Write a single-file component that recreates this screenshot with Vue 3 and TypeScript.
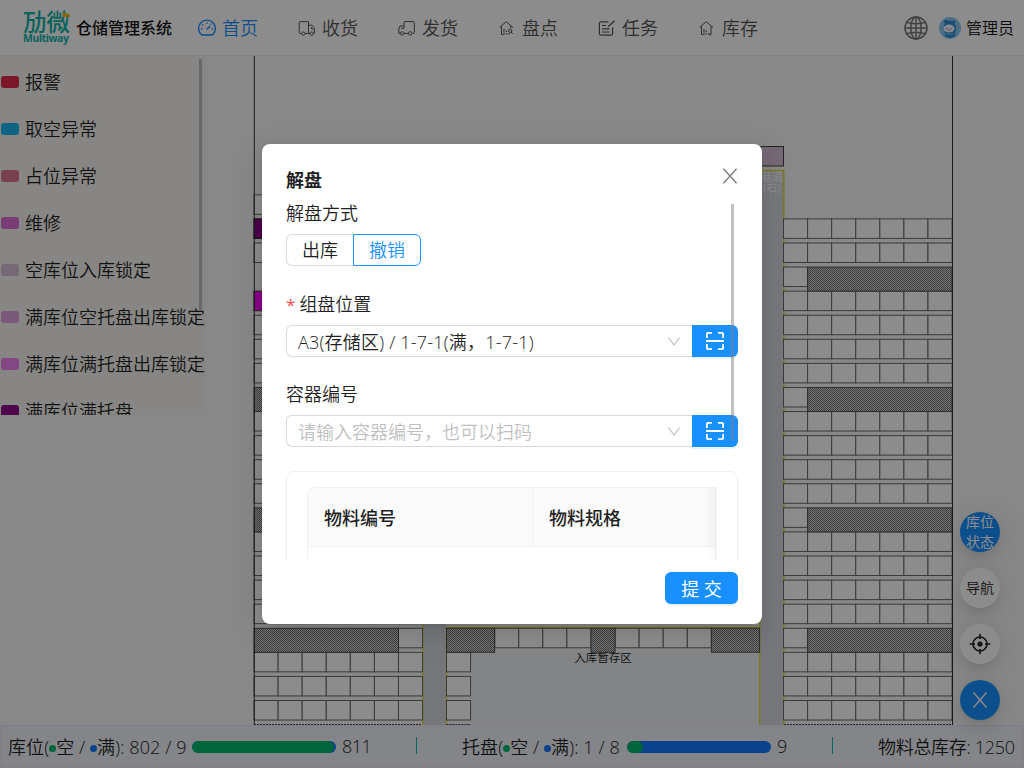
<script setup lang="ts">
interface Rect { x: number; y: number; w: number; h: number }
interface Legend { label: string; color: string }

const navItems = [
  { label: '首页', icon: 'dash' },
  { label: '收货', icon: 'truck' },
  { label: '发货', icon: 'truckBack' },
  { label: '盘点', icon: 'houseCheck' },
  { label: '任务', icon: 'form' },
  { label: '库存', icon: 'house' },
]

const legends: Legend[] = [
  { label: '报警', color: '#dc2847' },
  { label: '取空异常', color: '#1bb8ef' },
  { label: '占位异常', color: '#d9798f' },
  { label: '维修', color: '#da70d6' },
  { label: '空库位入库锁定', color: '#d8bfd8' },
  { label: '满库位空托盘出库锁定', color: '#dda0dd' },
  { label: '满库位满托盘出库锁定', color: '#ee82ee' },
  { label: '满库位满托盘', color: '#8b1089' },
]

const pitch = 24.08
const rowTop = (i: number) => 218.9 + pitch * i
const blockedRows = [2, 7, 12, 17]
const cells: Rect[] = []
const blocked: Rect[] = []

for (let i = 0; i <= 20; i++) {
  const y = rowTop(i)
  const isBlocked = blockedRows.includes(i)
  for (let c = 0; c < 7; c++) {
    if (!isBlocked || c === 0) cells.push({ x: 783.5 + c * pitch, y, w: pitch, h: 19.5 })
    if (i !== 2 && (!isBlocked || c === 6)) cells.push({ x: 254 + c * pitch, y, w: pitch, h: 19.5 })
  }
  if (isBlocked) {
    blocked.push({ x: 783.5 + pitch, y, w: pitch * 6, h: 24 })
    if (i !== 2) blocked.push({ x: 254, y, w: pitch * 6, h: 24 })
  }
  if (i > 17) cells.push({ x: 446.5, y, w: pitch, h: 19.5 })
}
cells.push({ x: 254, y: rowTop(-1), w: pitch, h: 19.5 })
for (let c = 2; c < 11; c++) {
  if (c !== 6) cells.push({ x: 446.5 + c * pitch, y: rowTop(17), w: pitch, h: 19.5 })
}
blocked.push(
  { x: 446.5, y: rowTop(17), w: pitch * 2, h: 24 },
  { x: 446.5 + pitch * 6, y: rowTop(17), w: pitch, h: 24 },
  { x: 446.5 + pitch * 11, y: rowTop(17), w: pitch * 2, h: 24 },
)
</script>

<template>
  <div class="page">
    <header class="header">
      <div class="logo"><span class="logo-cn">劢微</span><span class="logo-en">Multiway</span>
        <svg class="logo-flag" width="7" height="4" viewBox="0 0 7 4"><path d="M0 0h4l3 2v2H0z" fill="#f5bd16" /></svg>
      </div>
      <h1 class="brand">仓储管理系统</h1>
      <nav class="nav">
        <a v-for="(n, i) in navItems" :key="n.label" class="nav-item" :class="{ active: i === 0 }">
          <svg width="18" height="18" viewBox="0 0 18 18" fill="none" stroke="currentColor" stroke-width="1">
            <template v-if="n.icon === 'dash'">
              <path d="M3.7 16A8.4 8.4 0 1 1 14.3 16z" stroke-width="1.4" stroke-linejoin="round" />
              <path d="M8.6 10.6l3.6-3.6M9 3.4v1.6M4.2 5.4l1 1M12.6 5.4l.6-.6M2.9 10h1.5M13.6 10h1.5" stroke-width="1.4" />
            </template>
            <template v-else-if="n.icon === 'truck'">
              <path d="M3.5 14.5H2.2a1 1 0 0 1-1-1V3.7a1 1 0 0 1 1-1h8.3v11.8H7M10.5 6.2h3.6l2.3 3.2v5.1h-1M11 14.5h1M13.6 8.2v1.8h2" />
              <circle cx="5.2" cy="14.6" r="1.6" /><circle cx="13.6" cy="14.6" r="1.6" />
            </template>
            <template v-else-if="n.icon === 'truckBack'">
              <path d="M2.4 14.4H.8V10L2 7h4v2.3H3.2M6 7V3.6a1 1 0 0 1 1-1h8.3a1 1 0 0 1 1 1v9.8a1 1 0 0 1-1 1h-1M6 14.4h4.6" />
              <circle cx="4.2" cy="14.4" r="1.7" /><circle cx="12.2" cy="14.4" r="1.7" />
            </template>
            <template v-else-if="n.icon === 'form'">
              <path d="M10.5 2.8H3.2a1.8 1.8 0 0 0-1.8 1.8v9.8a1.8 1.8 0 0 0 1.8 1.8h9.6a1.8 1.8 0 0 0 1.8-1.8V8.2M10 7.8L16.5 1.8M4 6.5h4M4 9.8h7.5M4 13h7.5" stroke-width="1.2" />
            </template>
            <template v-else>
              <path d="M1.5 8.5L8.2 2.7 15 8.5" />
              <path d="M3.5 7.2v8.4h2" />
              <path v-if="n.icon === 'house'" d="M13 7.2v8.4h-2" />
              <path v-else d="M12.8 7v2" />
              <path d="M6 10v1.3M6 12.3v1.2M6 14.4v1.2M8.4 11.6v1.2M8.4 14.2v1.2M10.8 14.2v1.2" stroke-width="1.5" />
              <circle v-if="n.icon === 'houseCheck'" cx="12.2" cy="11.8" r="1.6" />
              <path v-if="n.icon === 'houseCheck'" d="M13.2 13l1.4 2" />
            </template>
          </svg>
          <span>{{ n.label }}</span>
        </a>
      </nav>
      <div class="account">
        <svg class="globe" width="24" height="24" viewBox="0 0 24 24" fill="none" stroke="#777" stroke-width="1.5">
          <circle cx="12" cy="12" r="11" /><ellipse cx="12" cy="12" rx="5.2" ry="11" />
          <path d="M12 1v22M1 12h22M3 6.2q9 3.2 18 0M3 17.8q9-3.2 18 0" />
        </svg>
        <svg width="22" height="22" viewBox="0 0 22 22">
          <circle cx="11" cy="11" r="11" fill="#8ac9f3" />
          <path d="M5 3.4q3-1 4 .6 2-.6 4 .2 1.600-1.700 3-.4.4 1.600-.6 3 3 4 1.100 7.200l-.5 5q-5.500 3.500-10 0l-.5-5Q3 10 6 6.500q-1.500-1.500-1-3.100z" fill="#2e8bd4" />
          <ellipse cx="10" cy="11.500" rx="5.600" ry="4" fill="#f2f8ff" />
          <path d="M7 11.700h1.300M11.500 11.700h1.300M9.300 13.300h1.200" stroke="#557" stroke-width=".8" />
          <path d="M6.500 16.500q4.500 2 8 0" stroke="#8ad4ff" stroke-width="1" fill="none" />
        </svg>
        <span class="user">管理员</span>
      </div>
    </header>

    <main class="stage">
      <svg class="map" width="1024" height="669" viewBox="0 56 1024 669">
        <defs>
          <pattern id="hatch" width="4" height="4" patternUnits="userSpaceOnUse">
            <rect width="4" height="4" fill="#d2d2d2" />
            <path d="M0 0h1v1H0zM1 1h1v1H1zM2 2h1v1H2zM3 3h1v1H3zM2 0h1v1H2zM3 1h1v1H3zM0 2h1v1H0zM1 3h1v1H1z" fill="#757575" />
          </pattern>
        </defs>
        <rect x="423" y="170" width="23.5" height="555" fill="#d6d9e0" />
        <rect x="760" y="170" width="23.5" height="555" fill="#d6d9e0" />
        <rect x="471" y="652.5" width="289" height="73" fill="#eef1f4" />
        <path d="M422.8 170V725M446.5 627V725M446 627.5H760M759.7 170V725M760 170.5H784M783.8 170V725" stroke="#e0dc3c" stroke-width="1.4" fill="none" />
        <rect v-for="(r, i) in cells" :key="'c' + i" :x="r.x" :y="r.y" :width="r.w" :height="r.h" class="cell" />
        <rect v-for="(r, i) in blocked" :key="'b' + i" :x="r.x" :y="r.y" :width="r.w" :height="r.h" class="blocked" />
        <rect x="254" y="218.9" width="24" height="19.5" fill="#8b008b" stroke="#333" />
        <rect x="254" y="291.2" width="24" height="19.5" fill="#ff00ff" stroke="#555" />
        <rect x="760" y="146.5" width="23.5" height="19.5" fill="#d8bfd8" stroke="#444" />
        <path d="M254.3 56V725M952.5 56V725" stroke="#333" fill="none" />
        <path d="M254 724.5H422M446.5 724.5H471M784 724.5H952" stroke="#444" stroke-dasharray="2 1" fill="none" />
        <text x="772" y="180.5" class="lane">巷道</text>
        <text x="772" y="192" class="lane">(右)</text>
        <text x="603" y="661.5" class="area">入库暂存区</text>
      </svg>
      <aside class="legend">
        <ul>
          <li v-for="l in legends" :key="l.label"><i :style="{ background: l.color }"></i><span>{{ l.label }}</span></li>
        </ul>
        <span class="legend-scroll"></span>
      </aside>
      <div class="floats">
        <button class="fab primary">库位<br>状态</button>
        <button class="fab">导航</button>
        <button class="fab">
          <svg width="22" height="22" viewBox="0 0 22 22" fill="none" stroke="#222" stroke-width="1.6">
            <circle cx="11" cy="11" r="7" /><path d="M11 .8V6M11 16v5.2M.8 11H6M16 11h5.2" /><circle cx="11" cy="11" r="2.6" fill="#222" stroke="none" />
          </svg>
        </button>
        <button class="fab primary">
          <svg width="16" height="18" viewBox="0 0 16 18" fill="none" stroke="#fff" stroke-width="1.4"><path d="M1.5 1.5l13 15M14.5 1.5l-13 15" /></svg>
        </button>
      </div>
    </main>

    <footer class="status">
      <span class="stat-label first">库位(<b class="dot green"></b>空 / <b class="dot blue"></b>满): 802 / 9</span>
      <span class="bar"><i :style="{ width: '98.9%' }"></i></span>
      <span class="num">811</span>
      <span class="sep"></span>
      <span class="stat-label second">托盘(<b class="dot green"></b>空 / <b class="dot blue"></b>满): 1 / 8</span>
      <span class="bar"><i :style="{ width: '11.1%' }"></i></span>
      <span class="num">9</span>
      <span class="sep"></span>
      <span class="total">物料总库存: 1250</span>
    </footer>

    <div class="mask">
      <section class="modal">
        <div class="modal-head">
          <h2>解盘</h2>
          <svg width="16" height="16" viewBox="0 0 16 16" fill="none" stroke="#858585" stroke-width="1.6"><path d="M1.4 .8l13.2 14.4M14.6 .8L1.4 15.2" /></svg>
        </div>
        <div class="modal-body">
          <div class="label">解盘方式</div>
          <div class="radios"><span class="radio">出库</span><span class="radio on">撤销</span></div>
          <div class="label spaced"><em>*</em>组盘位置</div>
          <div class="field">
            <div class="select value">
              <span>A3(存储区) / 1-7-1(满，1-7-1)</span>
              <svg width="12" height="9" viewBox="0 0 12 9" fill="none" stroke="#bfbfbf" stroke-width="1.2"><path d="M.5 .5L6 8 11.5 .5" /></svg>
            </div>
            <button class="scan">
              <svg width="18" height="18" viewBox="0 0 18 18" fill="none" stroke="#fff" stroke-width="1.8"><path d="M.9 6V2Q.9 .9 2 .9H6M12 .9h4q1.1 0 1.1 1.1V6M.9 12v4q0 1.1 1.1 1.1H6M12 17.1h4q1.1 0 1.1-1.1v-4M0 9h18" /></svg>
            </button>
          </div>
          <div class="label next">容器编号</div>
          <div class="field">
            <div class="select placeholder">
              <span>请输入容器编号，也可以扫码</span>
              <svg width="12" height="9" viewBox="0 0 12 9" fill="none" stroke="#bfbfbf" stroke-width="1.2"><path d="M.5 .5L6 8 11.5 .5" /></svg>
            </div>
            <button class="scan">
              <svg width="18" height="18" viewBox="0 0 18 18" fill="none" stroke="#fff" stroke-width="1.8"><path d="M.9 6V2Q.9 .9 2 .9H6M12 .9h4q1.1 0 1.1 1.1V6M.9 12v4q0 1.1 1.1 1.1H6M12 17.1h4q1.1 0 1.1-1.1v-4M0 9h18" /></svg>
            </button>
          </div>
          <div class="card">
            <div class="table">
              <div class="thead"><span>物料编号</span><span>物料规格</span></div>
            </div>
          </div>
          <span class="body-scroll"></span>
        </div>
        <div class="modal-foot"><button class="submit">提 交</button></div>
      </section>
    </div>
  </div>
</template>

<style>
body { margin: 0; overflow: hidden; }
</style>

<style scoped>
* { box-sizing: border-box; }
button { border: 0; padding: 0; font: inherit; }
.page {
  position: relative; width: 1024px; height: 768px; overflow: hidden;
  display: flex; flex-direction: column; background: #f7f7f7;
  font-family: "Open Sans", "Noto Sans CJK SC", sans-serif;
  font-size: 18px; font-weight: 350; color: #1f1f1f;
}
.header { height: 56px; flex: none; display: flex; align-items: center; background: #fff; border-bottom: 1px solid #eee; padding: 0 10px 0 23px; }
.logo { position: relative; width: 48px; height: 36px; color: #0fb5a6; display: flex; flex-direction: column; }
.logo-cn { height: 23px; margin-top: 1px; font: 500 23.5px/20px "Noto Sans CJK SC", sans-serif; white-space: nowrap; }
.logo-en { font: 700 10.5px/11px "Open Sans", sans-serif; letter-spacing: -.45px; margin-top: -1px; }
.logo-flag { position: absolute; left: 40px; top: 3px; }
.brand { margin: 0 0 0 5px; padding-bottom: 2px; width: 98px; font: 500 16px/24px "Noto Sans CJK SC", sans-serif; color: #111; white-space: nowrap; }
.nav { display: flex; margin-left: 24px; }
.nav-item { display: flex; align-items: center; gap: 6px; width: 100px; color: #555; white-space: nowrap; }
.nav-item span { padding-bottom: 2px; }
.nav-item.active { color: #1890ff; }
.account { margin-left: auto; display: flex; align-items: center; }
.account .globe { margin-right: 11px; }
.user { margin-left: 5px; padding-bottom: 1px; font-size: 16px; white-space: nowrap; color: #111; }
.stage { position: relative; height: 669px; flex: none; }
.map { display: block; }
.cell { fill: #fff; stroke: #6a6a6a; stroke-width: 1; }
.blocked { fill: url(#hatch); stroke: #555; stroke-width: 1; }
.lane { font-size: 11px; font-weight: 400; fill: #fff; text-anchor: middle; }
.area { font-size: 11.5px; fill: #222; text-anchor: middle; }
.legend { position: absolute; left: 0; top: 0; width: 206px; height: 359px; overflow: hidden; background: #f6f5f0; }
.legend ul { list-style: none; margin: 0; padding: 2px 0 0; }
.legend li { height: 47px; display: flex; align-items: center; gap: 6px; padding-left: 1px; white-space: nowrap; }
.legend li span { padding-bottom: 2px; }
.legend i { width: 18px; height: 12px; border-radius: 3px; flex: none; }
.legend-scroll { position: absolute; left: 199px; top: 3px; width: 3px; height: 251px; background: #bdbdbd; }
.floats { position: absolute; left: 960px; top: 456px; display: flex; flex-direction: column; gap: 16px; }
.fab { width: 40px; height: 40px; border-radius: 50%; background: #fff; display: grid; place-items: center; font-size: 14px; line-height: 20px; color: #222; box-shadow: 0 6px 16px rgba(0,0,0,.08), 0 3px 6px -4px rgba(0,0,0,.12), 0 9px 28px 8px rgba(0,0,0,.05); }
.fab.primary { background: #1890ff; color: #fff; font-weight: 400; }
.status { height: 43px; flex: none; display: flex; align-items: center; background: #f0f3f8; border: 2px solid #f3e7f7; padding: 0 6px; white-space: nowrap; }
.stat-label { letter-spacing: .1px; flex: none; padding-bottom: 2px; }
.stat-label.first { width: 184px; }
.stat-label.second { width: 165px; }
.dot { display: inline-block; width: 7px; height: 7px; border-radius: 50%; vertical-align: 2px; }
.green { background: #00b96b; }
.blue { background: #1677ff; }
.bar { width: 144px; height: 12px; border-radius: 6px; background: #1677ff; overflow: hidden; flex: none; }
.bar i { display: block; min-width: 16px; height: 12px; border-radius: 6px; background: #00b96b; }
.num { width: 74px; padding: 0 0 2px 6px; letter-spacing: -.5px; flex: none; }
.num + .sep { margin-right: 45px; }
.num ~ .num { width: 55px; }
.sep { margin: 0 6px 2px 6px; width: 1px; height: 17px; background: #12c0a4; flex: none; }
.total { width: 138px; flex: none; letter-spacing: -.3px; padding-bottom: 2px; }
.mask { position: absolute; left: 0; top: 0; width: 1024px; height: 768px; background: rgba(0,0,0,.45); display: grid; place-items: center; }
.modal { width: 500px; height: 480px; padding: 20px 24px; background: #fff; border-radius: 8px; display: flex; flex-direction: column; box-shadow: 0 6px 16px rgba(0,0,0,.08), 0 3px 6px -4px rgba(0,0,0,.12), 0 9px 28px 8px rgba(0,0,0,.05); }
.modal-head { height: 36px; display: flex; justify-content: space-between; padding-top: 1px; }
.modal-head svg { margin-top: 3px; }
.modal-head h2 { margin: 0; font: 600 18px/28px "Noto Sans CJK SC", sans-serif; }
.modal-body { position: relative; height: 360px; overflow: hidden; }
.label { height: 26px; line-height: 26px; }
.label em { font-style: normal; color: #ff4d4f; margin-right: 4px; font-size: 17px; font-weight: 400; }
.label.spaced { margin-top: 25px; }
.label.next { margin-top: 24px; }
.radios { display: flex; margin-top: 8px; height: 32px; }
.radio { width: 67px; border: 1px solid #d9d9d9; border-right: 0; border-radius: 6px 0 0 6px; text-align: center; line-height: 31px; }
.radio.on { width: 68px; border: 1px solid #1890ff; color: #1890ff; border-radius: 0 6px 6px 0; }
.field { display: flex; height: 32px; margin-top: 8px; }
.select { flex: 1; display: flex; align-items: center; justify-content: space-between; border: 1px solid #d9d9d9; border-right: 0; border-radius: 6px 0 0 6px; padding: 0 12px 0 11px; white-space: nowrap; }
.select span { padding-bottom: 1px; }
.select.value span { letter-spacing: .2px; }
.placeholder { color: #bfbfbf; }
.scan { width: 46px; background: #1890ff; border-radius: 0 6px 6px 0; display: grid; place-items: center; box-shadow: 0 2px 0 rgba(5,145,255,.1); }
.card { margin-top: 24px; height: 160px; border: 1px solid #f0f0f0; border-radius: 8px; padding: 15px 20px; }
.table { height: 140px; border: 1px solid #f0f0f0; border-right: 0; border-radius: 8px 0 0; box-shadow: inset -10px 0 8px -8px rgba(5,5,5,.08); overflow: hidden; }
.thead { display: flex; height: 59px; border-bottom: 1px solid #f0f0f0; background: linear-gradient(90deg, #fafafa 97%, #efefef); line-height: 60px; font-weight: 500; }
.thead span { padding-left: 16px; flex: 1; }
.thead span:first-child { flex: none; width: 225px; border-right: 1px solid #f0f0f0; }
.body-scroll { position: absolute; left: 445px; top: 4px; width: 3px; height: 237px; background: rgba(128,128,128,.5); }
.modal-foot { display: flex; justify-content: flex-end; padding-top: 12px; }
.submit { width: 73px; height: 32px; border-radius: 6px; color: #fff; background: #1890ff; font-weight: 400; box-shadow: 0 2px 0 rgba(5,145,255,.1); }
</style>
